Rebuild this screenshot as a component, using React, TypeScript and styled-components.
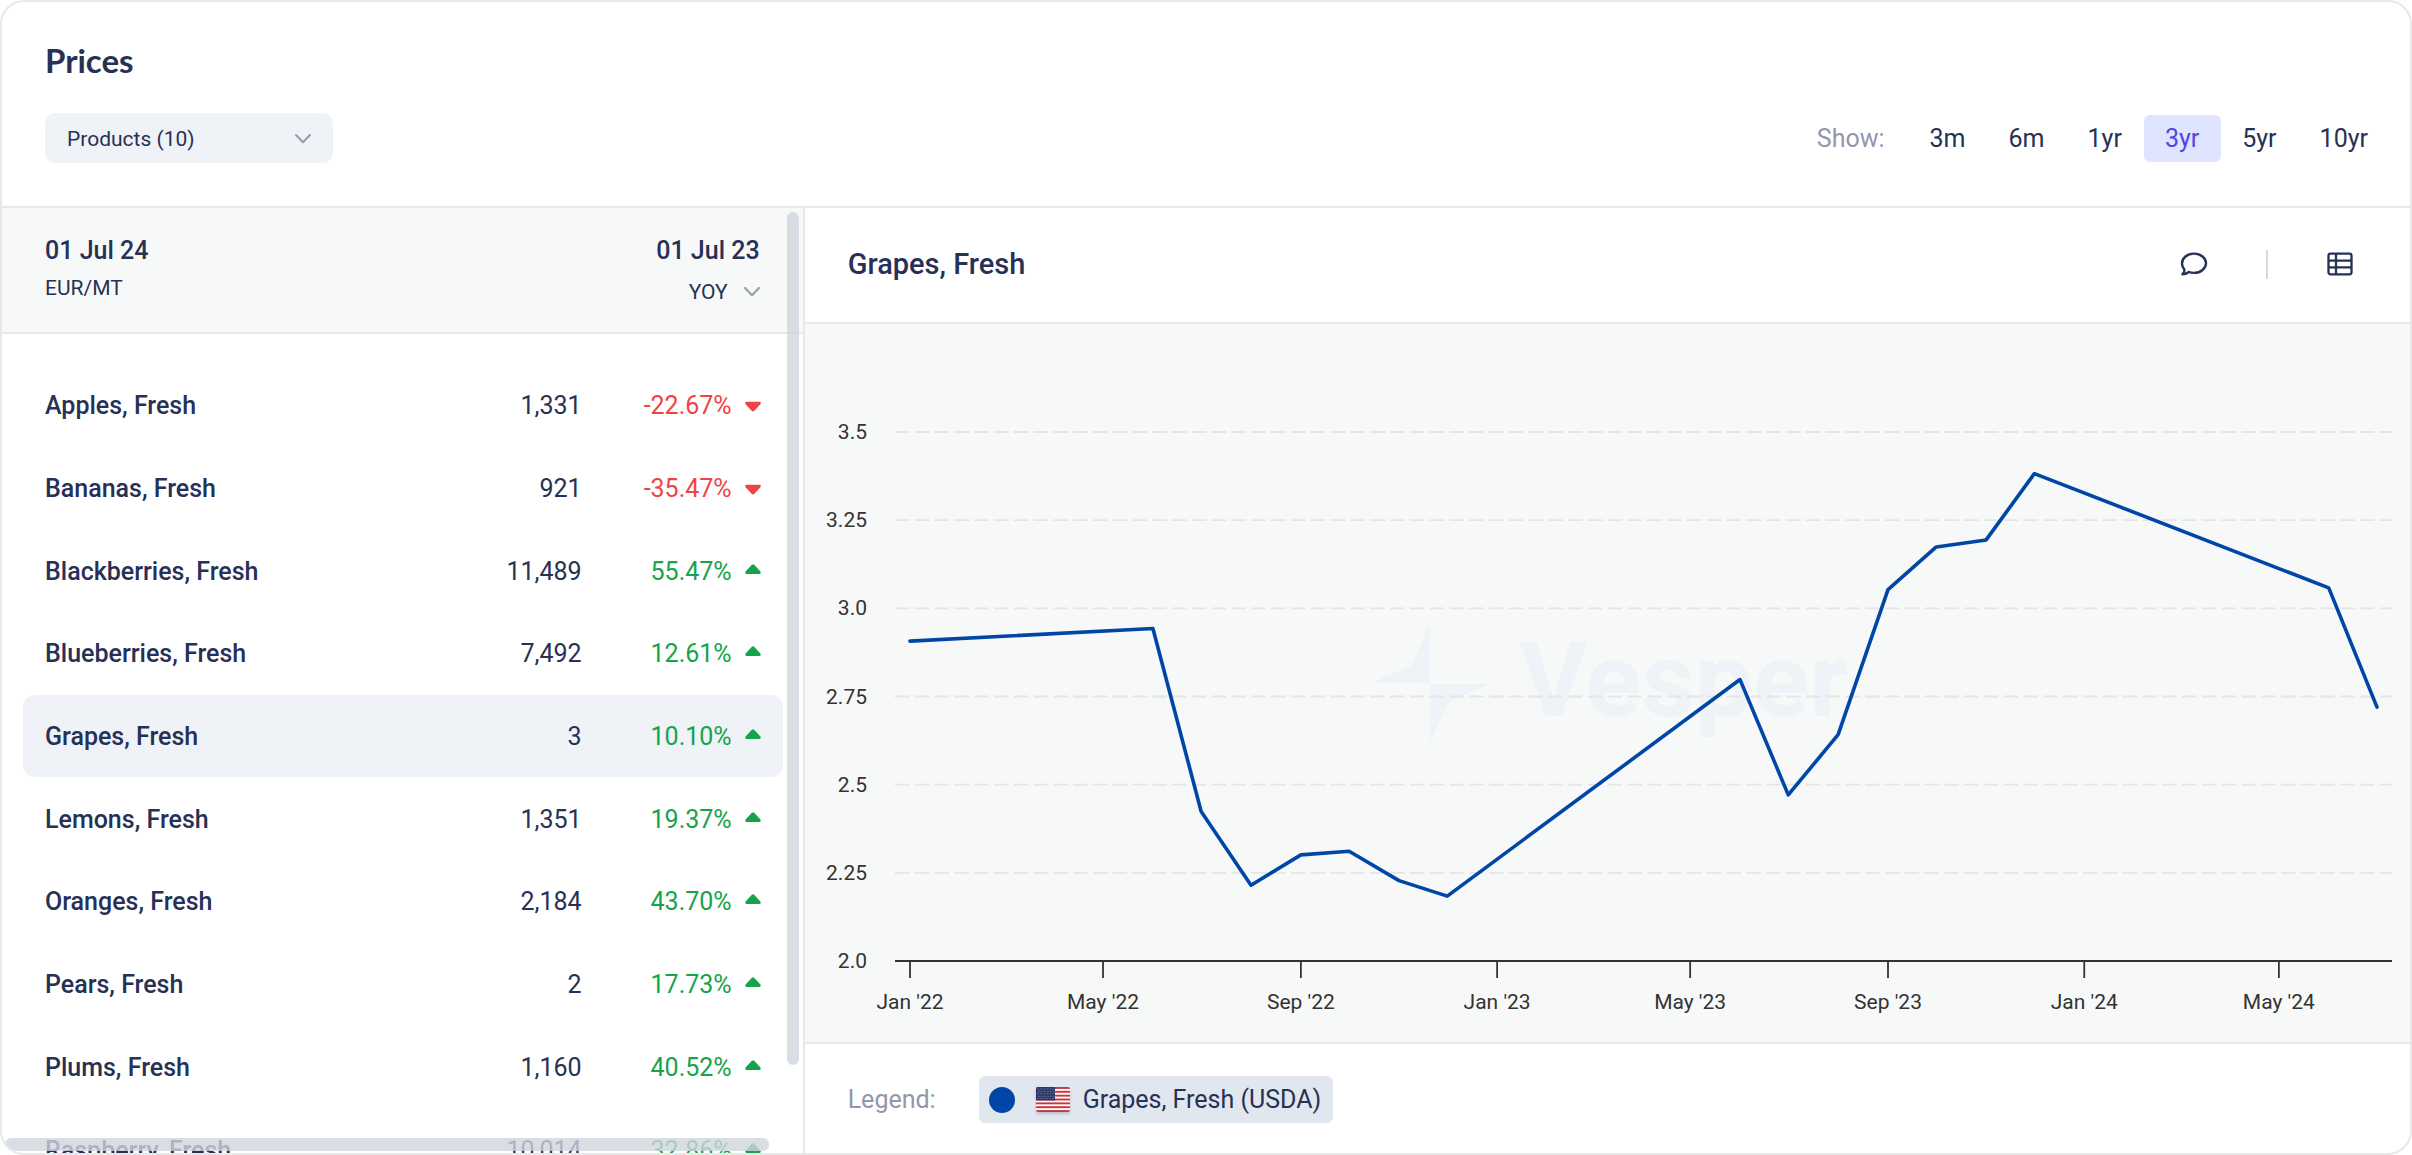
import { useLayoutEffect, useRef, useState } from 'react';
import styled, { createGlobalStyle } from 'styled-components';

const color = {
  ink: '#273156',
  muted: '#9297ab',
  line: '#e7e8ea',
  panel: '#f7f9f8',
  soft: '#eff3f7',
  chip: '#e1e7ef',
  accent: '#4f46e5',
  accentSoft: '#e0e5ff',
  up: '#16a34a',
  down: '#ef4444',
  series: '#0046a6',
  axis: '#333333',
  grid: '#e4e6e6',
  thumb: 'rgba(208, 212, 221, 0.8)',
};

const GlobalStyle = createGlobalStyle`
  * { box-sizing: border-box; }
  body {
    margin: 0;
    background: #ffffff;
    color: ${color.ink};
    font-family: Roboto, "Liberation Sans", sans-serif;
    font-size: 25px;
    line-height: 30px;
  }
  button, select { font: inherit; color: inherit; border: 0; background: none; margin: 0; padding: 0; cursor: pointer; }
  h1, h2 { margin: 0; }
`;

const Card = styled.main`
  display: flex;
  flex-direction: column;
  height: 100vh;
  border: 2px solid ${color.line};
  border-radius: 24px;
  overflow: hidden;
`;

const Header = styled.header`
  display: flex;
  flex-direction: column;
  gap: 33px;
  padding: 38px 20px 43px 43px;
  border-bottom: 2px solid ${color.line};
`;

const Title = styled.h1`
  font-family: Lato, Roboto, sans-serif;
  font-size: 33px;
  font-weight: 700;
  line-height: 40px;
`;

const Controls = styled.div`
  display: flex;
  align-items: center;
  justify-content: space-between;
`;

const ProductsButton = styled.button`
  display: flex;
  align-items: center;
  justify-content: space-between;
  width: 288px;
  height: 50px;
  padding: 2px 22px 0;
  border-radius: 10px;
  background: ${color.soft};
  font-size: 21px;
`;

const Ranges = styled.div`
  display: flex;
  align-items: center;
`;

const Muted = styled.span`
  color: ${color.muted};
`;

const RangeLabel = styled(Muted)`
  padding-top: 2px;
  margin-right: 24px;
`;

const RangeButton = styled.button<{ $active: boolean }>`
  height: 47px;
  padding: 2px 22px 0 21px;
  border-radius: 6px;
  color: ${(p) => (p.$active ? color.accent : 'inherit')};
  background: ${(p) => (p.$active ? color.accentSoft : 'transparent')};
`;

const Body = styled.div`
  flex: 1;
  min-height: 0;
  display: grid;
  grid-template-columns: minmax(0, 1fr) minmax(0, 2fr);
`;

const ListPanel = styled.section`
  position: relative;
  min-height: 0;
  overflow: hidden;
  border-right: 2px solid ${color.line};
`;

const ListHead = styled.div`
  display: flex;
  justify-content: space-between;
  padding: 28px 43px 26px;
  background: ${color.panel};
  border-bottom: 2px solid ${color.line};
`;

const HeadColumn = styled.div<{ $end?: boolean }>`
  display: flex;
  flex-direction: column;
  align-items: ${(p) => (p.$end ? 'flex-end' : 'flex-start')};
  gap: ${(p) => (p.$end ? 12 : 8)}px;
`;

const Strong = styled.span`
  font-weight: 500;
`;

const Unit = styled.span`
  font-size: 21px;
  line-height: 28px;
`;

const Compare = styled.label`
  display: flex;
  align-items: center;
  font-size: 21px;
  line-height: 28px;
  gap: 16px;
`;

const CompareSelect = styled.select`
  appearance: none;
  outline: 0;
  height: 28px;
`;

const ProductTable = styled.table`
  width: calc(100% - 41px);
  height: 827px;
  margin: 30px 20px 0 21px;
  border-collapse: separate;
  border-spacing: 0;
`;

const ProductRow = styled.tr<{ $selected: boolean }>`
  cursor: pointer;
  > * { background: ${(p) => (p.$selected ? color.soft : 'transparent')}; }
`;

const NameCell = styled.th`
  padding: 2px 0 0 22px;
  border-radius: 12px 0 0 12px;
  font-weight: 500;
  text-align: left;
`;

const PriceCell = styled.td`
  padding: 2px 0 0;
  text-align: right;
`;

const ChangeCell = styled.td<{ $up: boolean }>`
  width: 201px;
  padding: 2px 22px 0 0;
  border-radius: 0 12px 12px 0;
  color: ${(p) => (p.$up ? color.up : color.down)};
`;

const Change = styled.div`
  display: flex;
  align-items: center;
  justify-content: flex-end;
  gap: 13px;
`;

const VerticalThumb = styled.div`
  position: absolute;
  top: 4px;
  right: 4px;
  bottom: 88px;
  width: 12px;
  border-radius: 6px;
  background: ${color.thumb};
`;

const HorizontalThumb = styled.div`
  position: absolute;
  left: 3px;
  right: 34px;
  bottom: 2px;
  height: 13px;
  border-radius: 6px;
  background: ${color.thumb};
`;

const ChartPanel = styled.section`
  display: flex;
  flex-direction: column;
  min-height: 0;
`;

const ChartHead = styled.div`
  display: flex;
  align-items: center;
  justify-content: space-between;
  height: 116px;
  padding: 0 46px 2px 43px;
  border-bottom: 2px solid ${color.line};
`;

const ChartTitle = styled.h2`
  font-size: 29px;
  font-weight: 500;
  line-height: 36px;
`;

const Tools = styled.div`
  display: flex;
  align-items: center;
  gap: 48px;
`;

const ToolButton = styled.button`
  display: grid;
  place-items: center;
  width: 48px;
  height: 48px;
`;

const Divider = styled.span`
  width: 2px;
  height: 29px;
  background: #d5d8e0;
`;

const ChartArea = styled.div`
  flex: 1;
  min-height: 0;
  background: ${color.panel};

  svg { display: block; }
`;

const AxisText = styled.text`
  font-size: 21px;
  fill: ${color.axis};
`;

const WatermarkText = styled.text`
  font-size: 104px;
  font-weight: 700;
  fill: ${color.soft};
`;

const Legend = styled.footer`
  display: flex;
  align-items: center;
  gap: 43px;
  height: 111px;
  padding: 2px 43px 0;
  border-top: 2px solid #e3e8ec;
`;

const LegendChip = styled.button`
  display: flex;
  align-items: center;
  height: 47px;
  padding: 0 12px 0 10px;
  border-radius: 6px;
  background: ${color.chip};
`;

const Dot = styled.span`
  width: 26px;
  height: 26px;
  margin-right: 21px;
  border-radius: 50%;
  background: ${color.series};
`;

const FlagBox = styled.span`
  display: flex;
  margin-right: 13px;
  border-radius: 2px;
  overflow: hidden;
  box-shadow: 0 2px 3px rgba(39, 49, 86, 0.2);
`;

function Chevron() {
  return (
    <svg width="16" height="10" viewBox="0 0 16 10" fill="none" aria-hidden="true">
      <path d="M1 1l7 7.200L15 1" stroke="#9b9fb2" strokeWidth="2.300" strokeLinecap="round" strokeLinejoin="round" />
    </svg>
  );
}

function Trend({ up }: { up: boolean }) {
  return (
    <svg width="16" height="16" viewBox="0 0 16 16" aria-hidden="true">
      <path
        fill="currentColor"
        d={
          up
            ? 'M6.600.9Q8-.5 9.400.9L15.400 7.400Q16.600 9.800 14.400 10H1.600Q-.6 9.800.6 7.400Z'
            : 'M6.600 12.800Q8 14.200 9.400 12.800L15.400 6.300Q16.600 3.900 14.400 3.700H1.600Q-.6 3.900.6 6.300Z'
        }
      />
    </svg>
  );
}

function CommentIcon() {
  return (
    <svg width="28" height="26" viewBox="0 0 28 26" fill="none" aria-hidden="true">
      <path
        d="M2.400 23.300C4 22 4.700 20.300 4.300 18.400C2.900 16.700 2 14.700 2 12.500C2 7 7.200 2.600 14 2.600S26 7 26 12.200S20.800 21.900 14 21.900C12.100 21.900 10.400 21.600 8.900 21C7 22.400 4.800 23.300 2.400 23.300Z"
        stroke={color.ink}
        strokeWidth="2.400"
        strokeLinejoin="round"
      />
    </svg>
  );
}

function TableIcon() {
  return (
    <svg width="26" height="24" viewBox="0 0 26 24" fill="none" stroke={color.ink} strokeWidth="2.300" aria-hidden="true">
      <rect x="1.500" y="1.700" width="23" height="20.600" rx="2" />
      <path d="M1.500 8.600h23M1.500 15.400h23M9 1.700v20.600" />
    </svg>
  );
}

function UsFlag() {
  const stripe = 25 / 13;
  return (
    <svg width="34" height="25" viewBox="0 0 34 25" aria-hidden="true">
      <rect width="34" height="25" fill="#ffffff" />
      {[0, 2, 4, 6, 8, 10, 12].map((i) => (
        <rect key={i} y={i * stripe} width="34" height={stripe} fill="#c9363f" />
      ))}
      <rect width="19" height={stripe * 7} fill="#2c3868" />
      {[0, 1, 2, 3, 4].map((row) =>
        [0, 1, 2, 3, 4, 5].map((col) => (
          <circle key={`${row}-${col}`} cx={2 + col * 3 + (row % 2)} cy={2 + row * 2.4} r="0.5" fill="#aab0cc" />
        )),
      )}
    </svg>
  );
}

const products = [
  { name: 'Apples, Fresh', price: '1,331', change: '-22.67%' },
  { name: 'Bananas, Fresh', price: '921', change: '-35.47%' },
  { name: 'Blackberries, Fresh', price: '11,489', change: '55.47%' },
  { name: 'Blueberries, Fresh', price: '7,492', change: '12.61%' },
  { name: 'Grapes, Fresh', price: '3', change: '10.10%' },
  { name: 'Lemons, Fresh', price: '1,351', change: '19.37%' },
  { name: 'Oranges, Fresh', price: '2,184', change: '43.70%' },
  { name: 'Pears, Fresh', price: '2', change: '17.73%' },
  { name: 'Plums, Fresh', price: '1,160', change: '40.52%' },
  { name: 'Raspberry, Fresh', price: '10,014', change: '32.86%' },
];

const ranges = ['3m', '6m', '1yr', '3yr', '5yr', '10yr'];

const series: [string, number][] = [
  ['2022-01', 2.907],
  ['2022-06', 2.943],
  ['2022-07', 2.424],
  ['2022-08', 2.215],
  ['2022-09', 2.301],
  ['2022-10', 2.311],
  ['2022-11', 2.228],
  ['2022-12', 2.184],
  ['2023-06', 2.798],
  ['2023-07', 2.471],
  ['2023-08', 2.642],
  ['2023-09', 3.053],
  ['2023-10', 3.174],
  ['2023-11', 3.194],
  ['2023-12', 3.382],
  ['2024-06', 3.058],
  ['2024-07', 2.72],
];

const xTicks: [string, string][] = [
  ['2022-01', "Jan '22"],
  ['2022-05', "May '22"],
  ['2022-09', "Sep '22"],
  ['2023-01', "Jan '23"],
  ['2023-05', "May '23"],
  ['2023-09', "Sep '23"],
  ['2024-01', "Jan '24"],
  ['2024-05', "May '24"],
];

const yTicks: [number, string][] = [
  [3.5, '3.5'],
  [3.25, '3.25'],
  [3, '3.0'],
  [2.75, '2.75'],
  [2.5, '2.5'],
  [2.25, '2.25'],
  [2, '2.0'],
];

const time = (month: string) => Date.parse(`${month}-01T00:00:00Z`);

function PriceChart() {
  const box = useRef<HTMLDivElement>(null);
  const [size, setSize] = useState({ width: 1604, height: 718 });

  useLayoutEffect(() => {
    const node = box.current;
    if (!node) return;
    const measure = () => setSize({ width: node.clientWidth, height: node.clientHeight });
    measure();
    const observer = new ResizeObserver(measure);
    observer.observe(node);
    return () => observer.disconnect();
  }, []);

  const { width, height } = size;
  const left = 90;
  const right = width - 18;
  const top = 108;
  const bottom = height - 81;
  const start = time('2022-01');
  const end = time('2024-07');
  const x = (month: string) => left + 15 + ((time(month) - start) / (end - start)) * (right - left - 30);
  const y = (value: number) => bottom - ((value - 2) / 1.5) * (bottom - top);

  return (
    <ChartArea ref={box}>
      <svg width={width} height={height} role="img" aria-label="Grapes, Fresh price">
        <g transform={`translate(${width / 2 - 178} ${height / 2})`}>
          <path fill={color.soft} d="M0 -58V0H-60L-22 -15.500Q-18 -17 -16.500 -21Z" />
          <path fill={color.soft} d="M1 59V1H61L23 16.500Q19 18 17.500 22Z" />
          <WatermarkText x="90" y="33">Vesper</WatermarkText>
        </g>
        {yTicks.map(([value, label]) => (
          <g key={label}>
            {value > 2 && (
              <line x1={left} x2={right} y1={y(value)} y2={y(value)} stroke={color.grid} strokeWidth="1.800" strokeDasharray="14.4 5.4" />
            )}
            <AxisText x={left - 28} y={y(value) + 7} textAnchor="end">{label}</AxisText>
          </g>
        ))}
        <line x1={left} x2={right} y1={bottom} y2={bottom} stroke={color.axis} strokeWidth="1.800" />
        {xTicks.map(([month, label]) => (
          <g key={month}>
            <line x1={x(month)} x2={x(month)} y1={bottom} y2={bottom + 17} stroke={color.axis} strokeWidth="1.800" />
            <AxisText x={x(month)} y={bottom + 48} textAnchor="middle">{label}</AxisText>
          </g>
        ))}
        <polyline
          points={series.map(([month, value]) => `${x(month)},${y(value)}`).join(' ')}
          fill="none"
          stroke={color.series}
          strokeWidth="3.600"
          strokeLinejoin="round"
          strokeLinecap="round"
        />
      </svg>
    </ChartArea>
  );
}

export default function App() {
  const [range, setRange] = useState('3yr');
  const [selected, setSelected] = useState('Grapes, Fresh');

  return (
    <>
      <GlobalStyle />
      <Card>
        <Header>
          <Title>Prices</Title>
          <Controls>
            <ProductsButton type="button" aria-haspopup="listbox">
              Products (10)
              <Chevron />
            </ProductsButton>
            <Ranges>
              <RangeLabel>Show:</RangeLabel>
              {ranges.map((item) => (
                <RangeButton key={item} type="button" $active={item === range} aria-pressed={item === range} onClick={() => setRange(item)}>
                  {item}
                </RangeButton>
              ))}
            </Ranges>
          </Controls>
        </Header>
        <Body>
          <ListPanel>
            <ListHead>
              <HeadColumn>
                <Strong>01 Jul 24</Strong>
                <Unit>EUR/MT</Unit>
              </HeadColumn>
              <HeadColumn $end>
                <Strong>01 Jul 23</Strong>
                <Compare>
                  <CompareSelect aria-label="Comparison period" defaultValue="YOY">
                    <option>YOY</option>
                  </CompareSelect>
                  <Chevron />
                </Compare>
              </HeadColumn>
            </ListHead>
            <ProductTable aria-label="Product prices">
              <tbody>
                {products.map((item) => {
                  const up = !item.change.startsWith('-');
                  return (
                    <ProductRow key={item.name} $selected={item.name === selected} onClick={() => setSelected(item.name)}>
                      <NameCell scope="row">{item.name}</NameCell>
                      <PriceCell>{item.price}</PriceCell>
                      <ChangeCell $up={up}>
                        <Change>
                          {item.change}
                          <Trend up={up} />
                        </Change>
                      </ChangeCell>
                    </ProductRow>
                  );
                })}
              </tbody>
            </ProductTable>
            <VerticalThumb />
            <HorizontalThumb />
          </ListPanel>
          <ChartPanel>
            <ChartHead>
              <ChartTitle>Grapes, Fresh</ChartTitle>
              <Tools>
                <ToolButton type="button" aria-label="Comments">
                  <CommentIcon />
                </ToolButton>
                <Divider />
                <ToolButton type="button" aria-label="Table view">
                  <TableIcon />
                </ToolButton>
              </Tools>
            </ChartHead>
            <PriceChart />
            <Legend>
              <Muted>Legend:</Muted>
              <LegendChip type="button">
                <Dot />
                <FlagBox>
                  <UsFlag />
                </FlagBox>
                Grapes, Fresh (USDA)
              </LegendChip>
            </Legend>
          </ChartPanel>
        </Body>
      </Card>
    </>
  );
}
